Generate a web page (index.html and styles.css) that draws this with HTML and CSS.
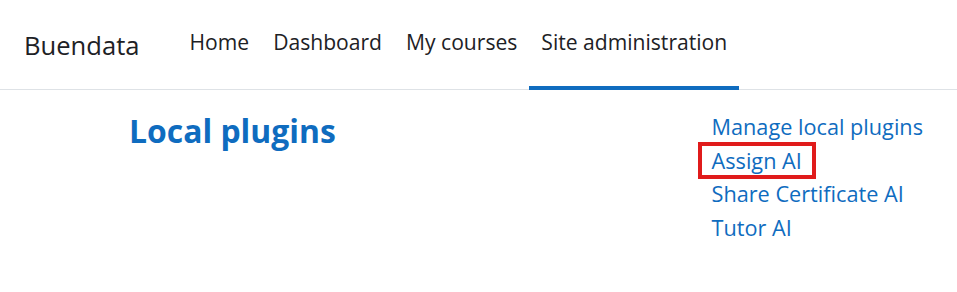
FILE: index.html
```html
<!DOCTYPE html>
<html>
<head>
<meta charset="utf-8">
<link rel="stylesheet" href="styles.css">
</head>
<body>
<header class="navbar">
  <div class="brand">Buendata</div>
  <nav class="primary">
    <a class="nav-item" href="#">Home</a>
    <a class="nav-item" href="#">Dashboard</a>
    <a class="nav-item" href="#">My courses</a>
    <a class="nav-item active" href="#">Site administration</a>
  </nav>
</header>
<main class="content">
  <h2 class="title">Local plugins</h2>
  <ul class="links">
    <li><a href="#">Manage local plugins</a></li>
    <li><a class="highlight" href="#">Assign AI</a></li>
    <li><a href="#">Share Certificate AI</a></li>
    <li><a href="#">Tutor AI</a></li>
  </ul>
</main>
</body>
</html>
```
FILE: styles.css
```css
* { box-sizing: border-box; }
html, body { margin: 0; padding: 0; background: #fff; }
body {
  font-family: "Open Sans", "Noto Sans", sans-serif;
  color: #1d2125;
  width: 957px;
  height: 292px;
  overflow: hidden;
}
.navbar {
  height: 90px;
  border-bottom: 1px solid #dee2e6;
  display: flex;
  align-items: stretch;
  padding-left: 24px;
}
.brand {
  font-size: 25.6px;
  display: flex;
  align-items: center;
  padding-top: 2px;
  margin-right: 38px;
  color: #1d2125;
}
.primary {
  display: flex;
  align-items: stretch;
}
.nav-item {
  font-size: 21.1px;
  color: #1d2125;
  text-decoration: none;
  display: flex;
  align-items: center;
  padding: 0 12px 4px;
  border-bottom: 4px solid transparent;
  margin-bottom: -1px;
}
.nav-item.active {
  border-bottom-color: #0f6cbf;
}
.content {
  display: flex;
  justify-content: space-between;
  align-items: flex-start;
  padding: 20px 34px 0 129px;
}
.title {
  margin: -0.5px 0 0;
  font-size: 31.9px;
  font-weight: 700;
  color: #0f6cbf;
  line-height: 1.3;
}
.links {
  list-style: none;
  margin: 0;
  padding: 0;
  font-size: 21.7px;
  line-height: 33.6px;
}
.links a {
  color: #0f6cbf;
  text-decoration: none;
}
.links a.highlight {
  border: 4px solid #e01b1b;
  padding: 0 10px;
  margin-left: -14px;
}
```
